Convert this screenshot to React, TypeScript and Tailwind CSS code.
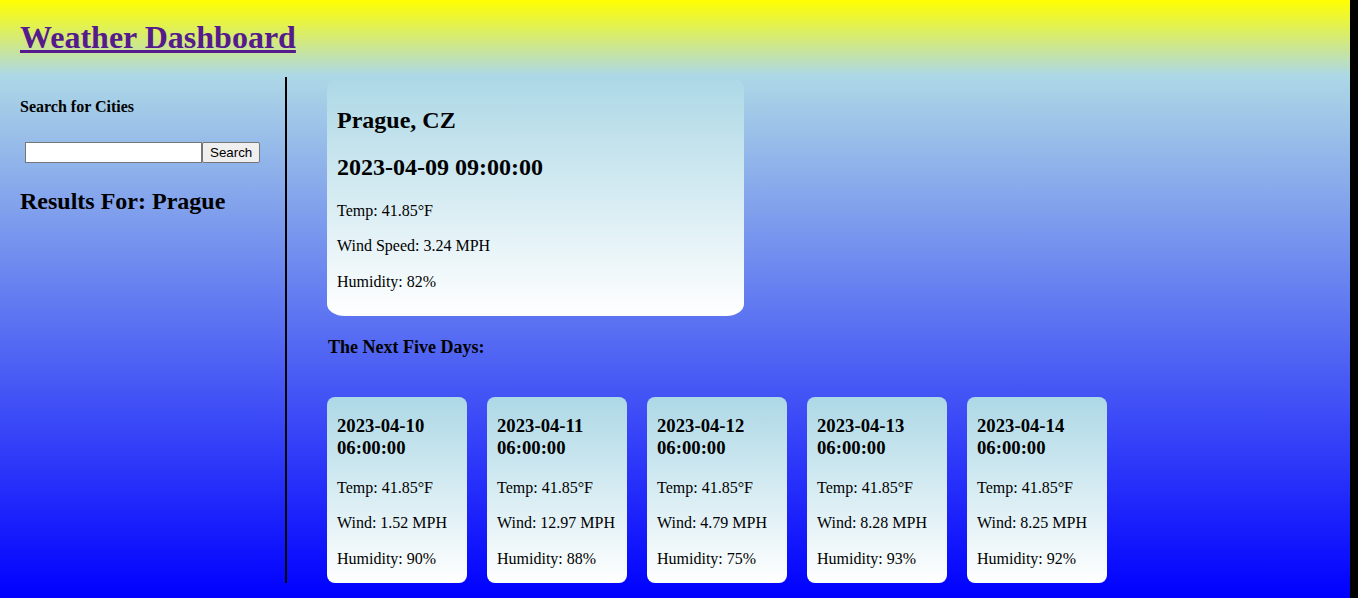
const days = [
  { date: "2023-04-10", temp: "41.85°F", wind: "1.52 MPH", humidity: "90%" },
  { date: "2023-04-11", temp: "41.85°F", wind: "12.97 MPH", humidity: "88%" },
  { date: "2023-04-12", temp: "41.85°F", wind: "4.79 MPH", humidity: "75%" },
  { date: "2023-04-13", temp: "41.85°F", wind: "8.28 MPH", humidity: "93%" },
  { date: "2023-04-14", temp: "41.85°F", wind: "8.25 MPH", humidity: "92%" },
];

function DayCard({ day }: { day: (typeof days)[number] }) {
  return (
    <div className="w-[140px] h-[186px] px-[10px] pt-[18px] rounded-[8px] bg-[linear-gradient(to_bottom,#add8e6,#ffffff)]">
      <h3 className="text-[18.72px] font-bold leading-[22px]">
        {day.date}
        <br />
        06:00:00
      </h3>
      <p className="mt-[19px] text-[16px] leading-[20px]">Temp: {day.temp}</p>
      <p className="mt-[15px] text-[16px] leading-[20px]">Wind: {day.wind}</p>
      <p className="mt-[16px] text-[16px] leading-[20px]">Humidity: {day.humidity}</p>
    </div>
  );
}

export default function App() {
  return (
    <div className="w-full h-[598px] bg-black overflow-hidden text-black font-['Liberation_Serif',serif]">
      <div className="w-[1350px] h-[598px] flex flex-col">
        <header className="h-[75px] px-[20px] pt-[19px] bg-[linear-gradient(to_bottom,#ffff00,#add8e6)]">
          <h1 className="text-[32px] font-bold leading-[36px]">
            <a href="#" className="text-[#551a8b] underline">Weather Dashboard</a>
          </h1>
        </header>

        <div className="flex-1 flex pt-[2px] pb-[15px] bg-[linear-gradient(to_bottom,#add8e6,#0000ff)]">
          <aside className="w-[287px] border-r-2 border-black pl-[20px] pt-[20px]">
            <h4 className="text-[16px] font-bold leading-[20px]">Search for Cities</h4>
            <div className="flex mt-[25px] ml-[5px] font-['Liberation_Sans',sans-serif] text-[13.33px]">
              <input type="text" className="w-[177px] h-[21px] bg-white border border-[#767676] px-[2px] outline-none" />
              <button className="h-[21px] px-[7px] bg-[#efefef] border border-[#767676] rounded-[2px] leading-[19px]">
                Search
              </button>
            </div>
            <h2 className="mt-[24px] text-[24px] font-bold leading-[28px]">Results For: Prague</h2>
          </aside>

          <main className="flex-1 pl-[40px] pt-[2px]">
            <div className="w-[417px] h-[237px] px-[10px] pt-[27px] rounded-t-[10px] rounded-bl-[18px_12px] rounded-br-[18px_12px] bg-[linear-gradient(to_bottom,#add8e6,#ffffff)]">
              <h2 className="text-[24px] font-bold leading-[28px]">Prague, CZ</h2>
              <h2 className="mt-[19px] text-[24px] font-bold leading-[28px]">2023-04-09 09:00:00</h2>
              <p className="mt-[20px] text-[16px] leading-[20px]">Temp: 41.85°F</p>
              <p className="mt-[15px] text-[16px] leading-[20px]">Wind Speed: 3.24 MPH</p>
              <p className="mt-[16px] text-[16px] leading-[20px]">Humidity: 82%</p>
            </div>

            <h3 className="mt-[20px] ml-[1px] text-[18px] font-bold leading-[22px]">The Next Five Days:</h3>

            <div className="flex gap-[20px] mt-[39px]">
              {days.map((d) => (
                <DayCard key={d.date} day={d} />
              ))}
            </div>
          </main>
        </div>
      </div>
    </div>
  );
}
